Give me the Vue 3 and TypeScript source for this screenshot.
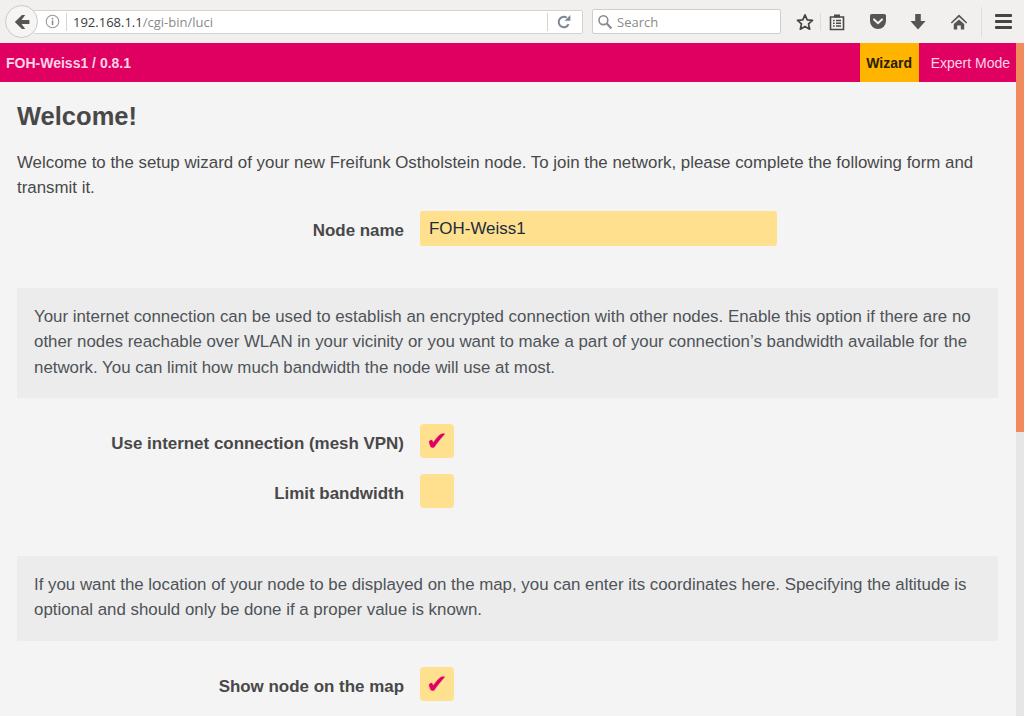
<script setup lang="ts">
const boxes = {
  mesh: 'Your internet connection can be used to establish an encrypted connection with other nodes. Enable this option if there are no other nodes reachable over WLAN in your vicinity or you want to make a part of your connection\u2019s bandwidth available for the network. You can limit how much bandwidth the node will use at most.',
  geo: 'If you want the location of your node to be displayed on the map, you can enter its coordinates here. Specifying the altitude is optional and should only be done if a proper value is known.',
}
</script>

<template>
  <div class="window">
    <header class="chrome">
      <button class="back" aria-label="Back">
        <svg width="16" height="16" viewBox="0 0 16 16"><path d="M.8 8 8 1h3.200L7.600 6H15.400v4H7.600l3.600 5H8z" fill="#555"/></svg>
      </button>
      <div class="urlbar">
        <svg class="info" width="15" height="15" viewBox="0 0 15 15"><circle cx="7.5" cy="7.5" r="6.3" fill="none" stroke="#999" stroke-width="1.1"/><rect x="6.8" y="6.4" width="1.5" height="4.6" fill="#888"/><rect x="6.8" y="3.8" width="1.5" height="1.6" fill="#888"/></svg>
        <span class="sep"></span>
        <span class="url"><b>192.168.1.1</b>/cgi-bin/luci</span>
        <span class="sep right"></span>
        <svg class="reload" width="16" height="16" viewBox="0 0 16 16"><path d="M12.6 10.2A5.2 5.2 0 1 1 10.6 3.6" fill="none" stroke="#7c8794" stroke-width="2"/><path d="M8.6 6.8h5.8V1z" fill="#7c8794"/></svg>
      </div>
      <div class="search">
        <svg width="16" height="16" viewBox="0 0 16 16"><circle cx="6.4" cy="6.2" r="4.4" fill="none" stroke="#8b8b8b" stroke-width="1.6"/><path d="m9.800 9.600 4.600 4.800" stroke="#8b8b8b" stroke-width="2.2"/></svg>
        <span>Search</span>
      </div>
      <div class="tools">
        <svg class="t-star" width="18" height="18" viewBox="0 0 18 18"><path d="M9 1.800 11.200 6.800l5.300.5-4 3.600 1.200 5.300L9 13.400l-4.700 2.800 1.200-5.300-4-3.600 5.300-.5z" fill="none" stroke="#444" stroke-width="1.7" stroke-linejoin="round"/></svg>
        <span class="t-sep"></span>
        <svg class="t-list" width="16" height="18" viewBox="0 0 16 18"><path d="M1.500 4h13v12.500h-13z" fill="none" stroke="#4a4a4a" stroke-width="1.6"/><rect x="5" y="1.500" width="6" height="3" fill="#4a4a4a"/><path d="M4 7.500h1.600M7 7.500h5M4 10.200h1.600M7 10.200h5M4 13h1.600M7 13h5" stroke="#4a4a4a" stroke-width="1.4"/></svg>
        <svg class="t-pocket" width="18" height="16" viewBox="0 0 18 16"><path d="M1 1.800C1 .8 1.800 0 2.800 0h12.400c1 0 1.800.8 1.800 1.800V7a8 8 0 0 1-16 0z" fill="#555"/><path d="m5 5.400 4 3.800 4-3.800" fill="none" stroke="#f1f1f1" stroke-width="2" stroke-linecap="round"/></svg>
        <svg class="t-down" width="16" height="16" viewBox="0 0 16 16"><path d="M5.200 0h5.600v7H15.600l-7.600 8.400L.4 7h4.800z" fill="#555"/></svg>
        <svg class="t-home" width="18" height="16" viewBox="0 0 18 16"><path d="M9 .6.8 8.400l1 1L9 3l7.200 6.400 1-1zM3.800 10 9 5.400l5.200 4.600v5.600h-3.400v-4H7.200v4H3.800z" fill="#555"/></svg>
        <span class="t-sep two"></span>
        <span class="burger"><i></i><i></i><i></i></span>
      </div>
    </header>

    <div class="viewport">
      <div class="page">
        <nav class="topbar">
          <span class="brand">FOH-Weiss1 / 0.8.1</span>
          <span class="spacer"></span>
          <a class="tab active">Wizard</a>
          <a class="tab">Expert Mode</a>
        </nav>
        <main class="content">
          <h2>Welcome!</h2>
          <p class="intro">Welcome to the setup wizard of your new Freifunk Ostholstein node. To join the network, please complete the following form and transmit it.</p>
          <div class="row name-row">
            <label>Node name</label>
            <input class="field" value="FOH-Weiss1" />
          </div>
          <div class="note">{{ boxes.mesh }}</div>
          <div class="row check-row first">
            <label>Use internet connection (mesh VPN)</label>
            <span class="check">✔</span>
          </div>
          <div class="row check-row">
            <label>Limit bandwidth</label>
            <span class="check"></span>
          </div>
          <div class="note geo">{{ boxes.geo }}</div>
          <div class="row check-row first">
            <label>Show node on the map</label>
            <span class="check">✔</span>
          </div>
        </main>
      </div>
      <div class="scrollbar"><div class="thumb"></div></div>
    </div>
  </div>
</template>

<style scoped>
.window { height: 716px; display: flex; flex-direction: column; overflow: hidden; background: #f4f4f4; }
.chrome { height: 43px; flex: none; display: flex; align-items: center; background: #f1f0ee; box-sizing: border-box; position: relative; padding-left: 5px; font-family: "Open Sans", sans-serif; }
.back { width: 33px; height: 33px; flex: none; border-radius: 50%; border: 1px solid #c9c9c9; background: #f6f5f3; padding: 0; display: flex; align-items: center; justify-content: center; z-index: 1; }
.urlbar { width: 549px; height: 24px; margin-left: -4px; background: #fff; border: 1px solid #d2d2d0; border-left: 0; border-radius: 0 2px 2px 0; display: flex; align-items: center; box-sizing: border-box; }
.info { margin-left: 11px; flex: none; }
.sep { width: 1px; height: 18px; background: #d5d5d5; margin-left: 6px; flex: none; }
.url { font-size: 13px; color: #8a8a8a; margin-left: 6px; flex: 1; white-space: nowrap; }
.url b { font-weight: 400; color: #3a3a3a; }
.sep.right { margin: 0; }
.reload { margin: 0 10px 0 8px; flex: none; }
.search { width: 189px; height: 25px; margin-left: 9px; background: #fff; border: 1px solid #cfcfcd; border-radius: 2px; display: flex; align-items: center; box-sizing: border-box; padding-left: 4px; gap: 4px; font-size: 13px; color: #8a8a8a; }
.tools { display: flex; align-items: center; flex: 1; padding-left: 15px; }
.t-sep { width: 1px; height: 18px; background: #dcdcdc; margin-left: 6px; }
.t-sep.two { height: 30px; margin-left: 13px; }
.t-list { margin-left: 8px; }
.t-pocket { margin-left: 24px; }
.t-down { margin-left: 23px; }
.t-home { margin-left: 24px; }
.burger { display: flex; flex-direction: column; gap: 3px; margin-left: 13px; }
.burger i { display: block; width: 17px; height: 3px; background: #444; border-radius: 1px; }

.viewport { flex: 1; display: flex; min-height: 0; }
.page { flex: 1; min-width: 0; font-family: "Liberation Sans", Arial, sans-serif; color: #484848; }
.topbar { height: 39px; background: #e00062; display: flex; align-items: stretch; color: #ffd4e6; font-size: 14px; }
.brand { font-weight: 700; padding-left: 6px; align-self: center; }
.spacer { flex: 1; }
.tab { display: flex; align-items: center; padding: 0 6px 0 12px; }
.tab.active { width: 59px; box-sizing: border-box; justify-content: center; padding: 0; background: #ffb400; color: #2a2000; font-weight: 700; }
.content { padding: 0 18px 0 17px; }
h2 { margin: 0; padding-top: 19px; font-size: 25.500px; line-height: 30px; font-weight: 700; color: #484848; }
.intro { margin: 19px 0 0; font-size: 16.870px; line-height: 25px; }
.row { display: flex; align-items: center; }
.row label { width: 387px; flex: none; box-sizing: border-box; text-align: right; font-weight: 700; font-size: 16.950px; color: #484848; padding: 4px 0 0; }
.check-row label { padding-top: 6px; }
.name-row { margin-top: 11px; }
.field { margin-left: 16px; width: 357px; height: 35px; box-sizing: border-box; border: 0; border-radius: 3px; background: #ffe08f; padding: 0 9px; font: 16.950px "Liberation Sans", Arial, sans-serif; color: #1c2c3c; }
.note { margin-top: 42px; padding: 16px 17px 8px; background: #ececec; font-size: 16.870px; line-height: 25.400px; height: 110px; box-sizing: border-box; color: #4e5358; }
.note.geo { margin-top: 48px; height: 85px; }
.check-row { margin-top: 16px; }
.check-row.first { margin-top: 26px; }
.check { margin-left: 16px; width: 34px; height: 34px; border-radius: 4px; background: #ffe08f; color: #e20067; display: flex; align-items: center; justify-content: center; font: 26px "DejaVu Sans", sans-serif; }
.scrollbar { width: 8px; flex: none; background: #e6e6e6; }
.thumb { height: 389px; background: #f18a5c; }
</style>
